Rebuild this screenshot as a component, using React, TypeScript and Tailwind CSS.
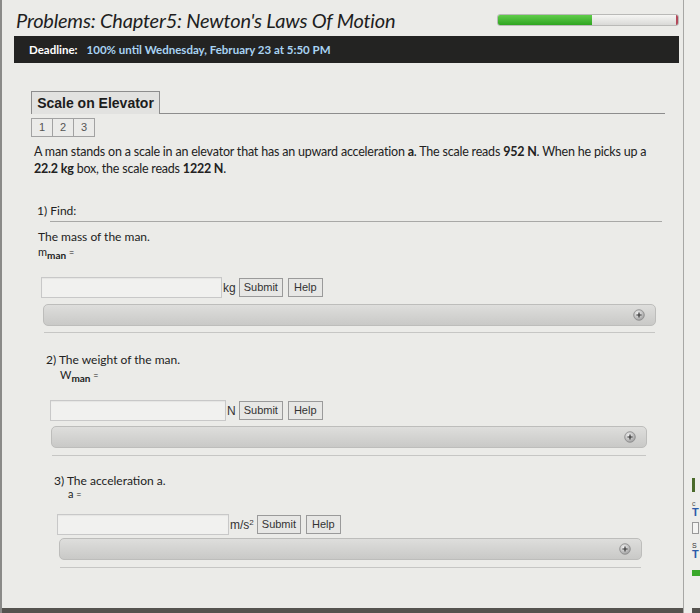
import React from "react";

const body = { fontFamily: "Lato, 'Open Sans', sans-serif" };
const arial = { fontFamily: "'Liberation Sans', Arial, sans-serif" };

function PlusIcon() {
  return (
    <svg width="12" height="12" viewBox="0 0 12 12">
      <defs>
        <radialGradient id="pg" cx="40%" cy="35%" r="70%">
          <stop offset="0%" stopColor="#f4f4f4" />
          <stop offset="100%" stopColor="#9a9a9a" />
        </radialGradient>
      </defs>
      <circle cx="6" cy="6" r="5.3" fill="url(#pg)" stroke="#8a8a8a" strokeWidth="0.8" />
      <path d="M6 3.4v5.2M3.4 6h5.2" stroke="#333" strokeWidth="1.2" />
    </svg>
  );
}

function AnswerRow({ unit, inputW }: { unit: React.ReactNode; inputW: string }) {
  return (
    <div className="flex items-center" style={arial}>
      <div className={`h-[21px] ${inputW} border border-[#c8c8c8] bg-[#f1f1ef] shadow-[inset_0_1px_1px_rgba(0,0,0,0.05)]`} />
      <span className="ml-[1px] text-[12px] text-[#333]">{unit}</span>
      <button className="ml-[3px] h-[19px] px-[4px] border border-[#9a9a9a] bg-[#e7e7e5] text-[11px] text-[#333] leading-none">
        Submit
      </button>
      <button className="ml-[5px] h-[19px] px-[5px] border border-[#9a9a9a] bg-[#e7e7e5] text-[11px] text-[#333] leading-none">
        Help
      </button>
    </div>
  );
}

function HintBar({ width }: { width: string }) {
  return (
    <div
      className={`${width} h-[22px] rounded-[5px] border border-[#bdbdbb] bg-gradient-to-b from-[#dededc] to-[#c9c9c7] flex items-center justify-end pr-[10px]`}
    >
      <PlusIcon />
    </div>
  );
}

function Var({ base, sub, className }: { base: string; sub?: string; className: string }) {
  return (
    <div className={`${className} text-[11px] leading-[14px] h-[14px]`}>
      {base}
      {sub && <span className="relative top-[3px] text-[10px] font-bold">{sub}</span>}{" "}
      <span className="text-[9px]">=</span>
    </div>
  );
}

export default function App() {
  return (
    <div className="w-[700px] h-[613px] overflow-hidden bg-[#ebebe8] flex text-[#222]" style={body}>
      <div className="w-[684px] h-full flex flex-col border-l-2 border-[#8a8a88]">
        {/* header */}
        <div className="flex items-start pl-[14px] pt-[7px] h-[36px]">
          <h1 className="italic text-[20px] leading-[26px] text-[#1e1e1e] tracking-[-0.2px] w-[481px]">
            Problems: Chapter5: Newton's Laws Of Motion
          </h1>
          <div className="mt-[7px] w-[182px] h-[12px] rounded-[3px] border border-[#b9b9b7] bg-gradient-to-b from-[#f6f6f4] to-[#d9d9d7] overflow-hidden flex">
            <div className="w-[52%] h-full bg-gradient-to-b from-[#5fcc4a] to-[#2ea51f]" />
            <div className="flex-1" />
            <div className="w-[2px] h-full bg-[#b3485a]" />
          </div>
        </div>

        {/* deadline */}
        <div className="ml-[12px] w-[665px] h-[27px] bg-[#232322] flex items-center pl-[15px] text-[11.5px] font-bold">
          <span className="text-white">Deadline:</span>
          <span className="ml-[9px] text-[#a9d3f3]">100% until Wednesday, February 23 at 5:50 PM</span>
        </div>

        {/* tab */}
        <div className="mt-[28px] ml-[29px] flex items-end w-[634px]">
          <div
            className="w-[129px] h-[23px] border border-b-0 border-[#8d8d8d] bg-[#e2e2e0] flex items-center justify-center text-[14px] font-bold text-[#1c1c1c]"
            style={arial}
          >
            Scale on Elevator
          </div>
          <div className="flex-1 border-b border-[#8d8d8d]" />
        </div>
        <div className="ml-[29px] mt-[4px] flex text-[11px] text-[#555]" style={arial}>
          {["1", "2", "3"].map((n) => (
            <div
              key={n}
              className="w-[22px] h-[19px] border border-[#a2a2a2] -ml-[1px] first:ml-0 bg-[#ebebe9] flex items-center justify-center"
            >
              {n}
            </div>
          ))}
        </div>

        {/* problem */}
        <p className="ml-[32px] mt-[6px] w-[620px] text-[12.5px] leading-[17px] tracking-[-0.2px]">
          A man stands on a scale in an elevator that has an upward acceleration <b>a</b>. The scale reads{" "}
          <b>952 N</b>. When he picks up a <b>22.2 kg</b> box, the scale reads <b>1222 N</b>.
        </p>

        {/* part 1 */}
        <div className="ml-[35px] mt-[26px] text-[12px] leading-[16px]">1) Find:</div>
        <div className="ml-[48px] mt-[2px] w-[612px] border-b border-[#a8a8a6]" />
        <div className="ml-[36px] mt-[7px] text-[12px] leading-[16px]">The mass of the man.</div>
        <Var className="ml-[36px]" base="m" sub="man" />
        <div className="ml-[39px] mt-[18px]">
          <AnswerRow unit="kg" inputW="w-[181px]" />
        </div>
        <div className="ml-[41px] mt-[6px]">
          <HintBar width="w-[613px]" />
        </div>
        <div className="ml-[42px] mt-[6px] w-[611px] border-b border-[#c6c6c4]" />

        {/* part 2 */}
        <div className="ml-[44px] mt-[19px] text-[12px] leading-[16px]">2) The weight of the man.</div>
        <Var className="ml-[58px]" base="W" sub="man" />
        <div className="ml-[48px] mt-[18px]">
          <AnswerRow unit="N" inputW="w-[176px]" />
        </div>
        <div className="ml-[49px] mt-[5px]">
          <HintBar width="w-[596px]" />
        </div>
        <div className="ml-[50px] mt-[7px] w-[594px] border-b border-[#c6c6c4]" />

        {/* part 3 */}
        <div className="ml-[52px] mt-[18px] text-[12px] leading-[13px]">3) The acceleration a.</div>
        <Var className="ml-[66px]" base="a" />
        <div className="ml-[55px] mt-[13px]">
          <AnswerRow
            unit={
              <span>
                m/s<sup className="text-[8px]">2</sup>
              </span>
            }
            inputW="w-[172px]"
          />
        </div>
        <div className="ml-[57px] mt-[3px]">
          <HintBar width="w-[583px]" />
        </div>
        <div className="ml-[58px] mt-[7px] w-[581px] border-b border-[#c6c6c4]" />

        <div className="mt-auto h-[5px] bg-[#55534f]" />
      </div>

      {/* right column fragment */}
      <div className="flex-1 h-full border-l border-[#a7a7a5] bg-[#ededea] flex flex-col items-start pl-[8px]" style={arial}>
        <div className="mt-[478px] w-[3px] h-[14px] bg-[#4a6a2a]" />
        <div className="mt-[8px] text-[7px] leading-[7px] text-[#555]">c</div>
        <div className="text-[11px] leading-[11px] font-bold text-[#2a5aa8]">T</div>
        <div className="mt-[4px] w-[7px] h-[12px] border border-[#999] bg-[#f4f4f2]" />
        <div className="mt-[8px] text-[7px] leading-[7px] text-[#333]">S</div>
        <div className="text-[11px] leading-[11px] font-bold text-[#2a5aa8]">T</div>
        <div className="mt-[10px] w-[8px] h-[6px] bg-[#3aa82a]" />
        <div className="mt-auto w-full h-[5px] bg-[#55534f]" />
      </div>
    </div>
  );
}
